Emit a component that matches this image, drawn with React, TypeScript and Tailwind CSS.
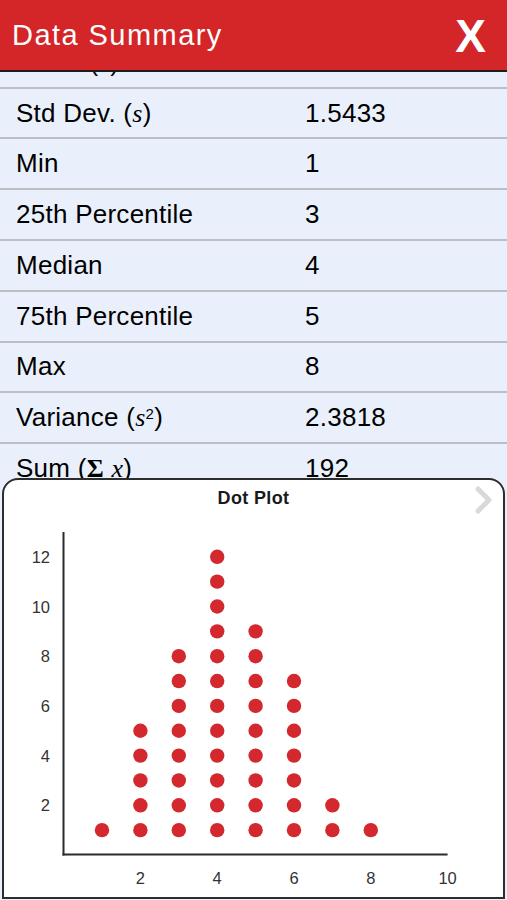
import React from "react";

const serif = { fontFamily: '"Liberation Serif", "DejaVu Serif", serif' };

function Sym({ children }: { children: React.ReactNode }) {
  return (
    <span className="italic" style={serif}>
      {children}
    </span>
  );
}

export default function App() {
  const rows: { label: React.ReactNode; value: string }[] = [
    { label: <>Mean (<Sym>x̄</Sym>)</>, value: "4.2667" },
    { label: <>Std Dev. (<Sym>s</Sym>)</>, value: "1.5433" },
    { label: "Min", value: "1" },
    { label: "25th Percentile", value: "3" },
    { label: "Median", value: "4" },
    { label: "75th Percentile", value: "5" },
    { label: "Max", value: "8" },
    {
      label: (
        <>
          Variance (<Sym>s</Sym>
          <sup className="text-[15px]">2</sup>)
        </>
      ),
      value: "2.3818",
    },
    {
      label: (
        <>
          Sum (<span className="font-bold" style={serif}>Σ</span> <Sym>x</Sym>)
        </>
      ),
      value: "192",
    },
    { label: <>Count (<Sym>n</Sym>)</>, value: "45" },
  ];

  // dot plot data: value -> frequency
  const counts: [number, number][] = [
    [1, 1],
    [2, 5],
    [3, 8],
    [4, 12],
    [5, 9],
    [6, 7],
    [7, 2],
    [8, 1],
  ];

  // svg origin sits at page (4, 516)
  const px = (v: number) => 59.6 + 38.4 * v;
  const py = (n: number) => 339 - 24.85 * n;

  return (
    <div
      className="w-[507px] h-[900px] flex flex-col bg-[#eaf0fb] overflow-hidden text-black"
      style={{ fontFamily: '"Liberation Sans", Arial, sans-serif' }}
    >
      <header className="h-[72px] shrink-0 bg-[#d42528] border-b-2 border-[#1e1e1e] flex items-center justify-between pl-3 pr-[21px]">
        <h1 className="text-white text-[29px] tracking-[0.05em] pt-[2px]">Data Summary</h1>
        <button className="text-white font-bold text-[46px] leading-none pt-[2px]">X</button>
      </header>

      <div className="h-[406px] shrink-0 overflow-hidden">
        <div className="-mt-[34.2px]">
          {rows.map((row, i) => (
            <div
              key={i}
              className="h-[50.8px] border-b-2 border-[#bcbec3] flex items-center text-[26px] tracking-[0.01em]"
            >
              <div className="w-[305px] pl-4 whitespace-nowrap">{row.label}</div>
              <div>{row.value}</div>
            </div>
          ))}
        </div>
      </div>

      <section className="flex-1 mx-[2px] mb-[1px] bg-white border-2 border-[#2d2d2d] rounded-t-[16px] flex flex-col">
        <div className="h-[36px] shrink-0 relative flex items-center justify-center">
          <h2 className="font-bold text-[18px] tracking-[0.02em] text-[#1a1a1a]">Dot Plot</h2>
          <svg
            className="absolute right-[9px] top-[6px]"
            width="20"
            height="28"
            viewBox="0 0 20 28"
          >
            <polyline
              points="4,3 15,14 4,25"
              fill="none"
              stroke="#d9d9d9"
              strokeWidth="5"
              strokeLinecap="round"
              strokeLinejoin="round"
            />
          </svg>
        </div>

        <svg width="501" height="380" viewBox="0 0 501 380" className="shrink-0">
          <line x1="59.5" y1="16" x2="59.5" y2="339.5" stroke="#2b2b2b" strokeWidth="2" />
          <line x1="58.5" y1="338.5" x2="443.6" y2="338.5" stroke="#2b2b2b" strokeWidth="2" />

          {[2, 4, 6, 8, 10, 12].map((n) => (
            <text
              key={n}
              x="46"
              y={py(n) + 6}
              textAnchor="end"
              fontSize="16.5"
              fill="#333"
              fontFamily='"Liberation Sans", Arial, sans-serif'
            >
              {n}
            </text>
          ))}

          {[2, 4, 6, 8, 10].map((v) => (
            <text
              key={v}
              x={px(v)}
              y="367.5"
              textAnchor="middle"
              fontSize="16.5"
              fill="#333"
              fontFamily='"Liberation Sans", Arial, sans-serif'
            >
              {v}
            </text>
          ))}

          {counts.map(([v, c]) =>
            Array.from({ length: c }, (_, k) => (
              <circle key={`${v}-${k}`} cx={px(v)} cy={py(k + 1)} r="7.2" fill="#d3282d" />
            ))
          )}
        </svg>
      </section>
    </div>
  );
}
